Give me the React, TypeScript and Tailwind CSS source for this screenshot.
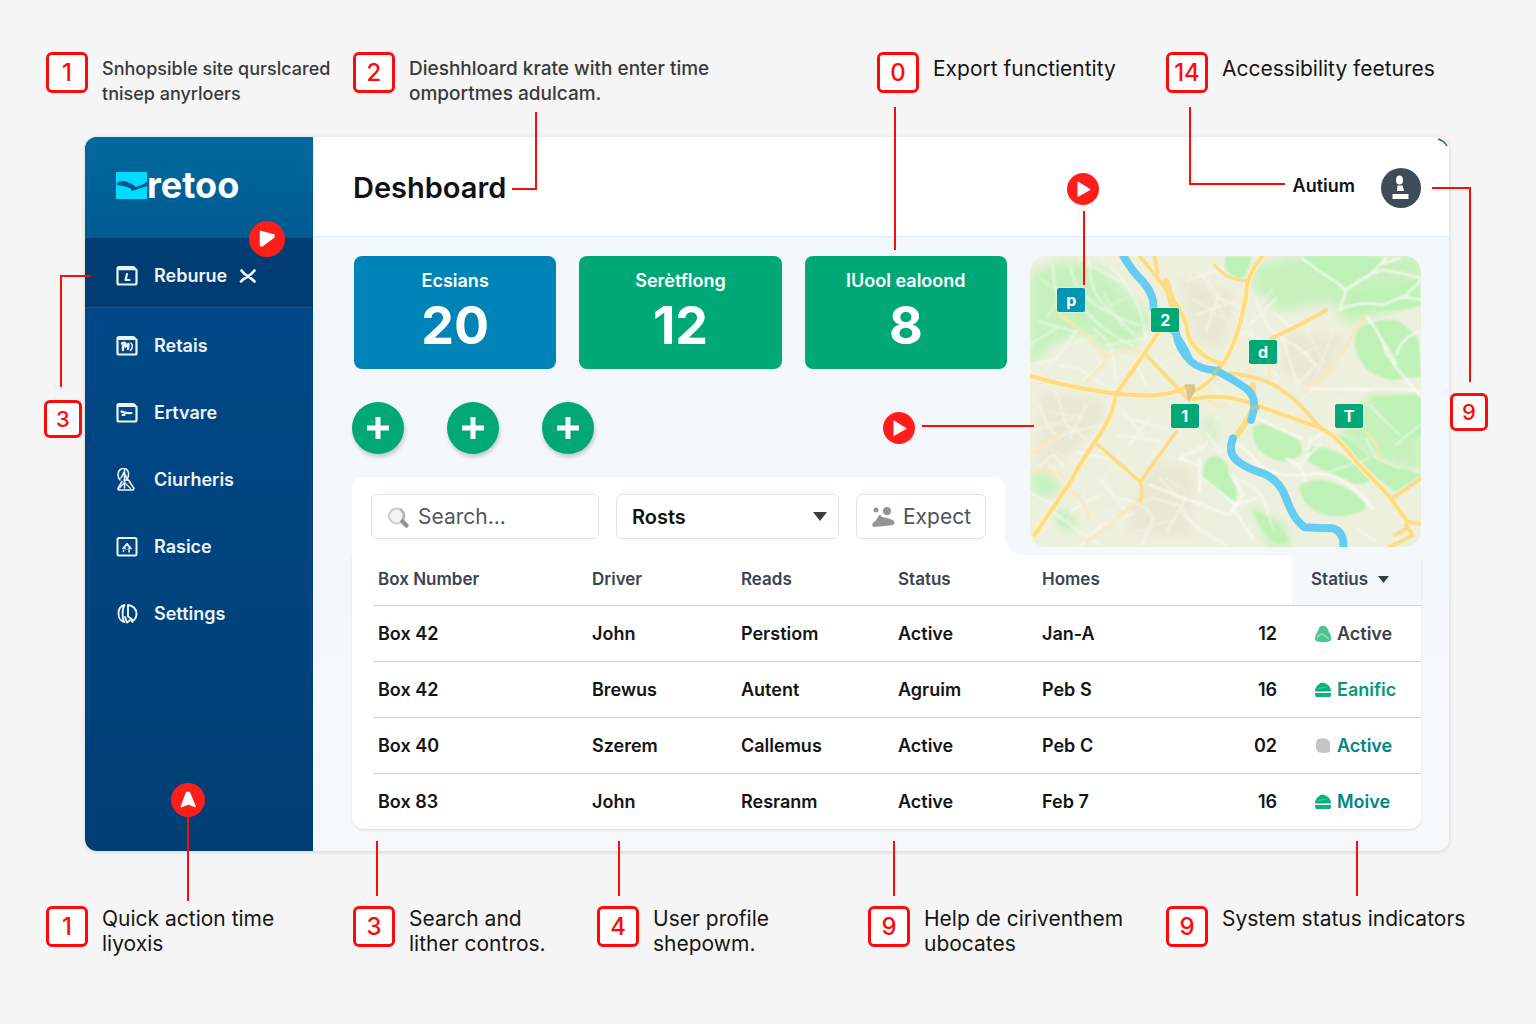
import React from "react";

type IconName = "ledger" | "photo" | "inbox" | "people" | "alert" | "globe";

const NAV: { label: string; icon: IconName }[] = [
  { label: "Retais", icon: "photo" },
  { label: "Ertvare", icon: "inbox" },
  { label: "Ciurheris", icon: "people" },
  { label: "Rasice", icon: "alert" },
  { label: "Settings", icon: "globe" },
];

const STATS = [
  { label: "Ecsians", value: "20", tone: "bg-[#0084b8]" },
  { label: "Serètflong", value: "12", tone: "bg-[#00a878]" },
  { label: "IUool ealoond", value: "8", tone: "bg-[#00a878]" },
];

const ROWS = [
  { box: "Box 42", driver: "John", reads: "Perstiom", status: "Active", home: "Jan-A", count: "12", state: "Active", tone: "text-[#3c4148]", mark: "bell" },
  { box: "Box 42", driver: "Brewus", reads: "Autent", status: "Agruim", home: "Peb S", count: "16", state: "Eanific", tone: "text-[#009b74]", mark: "dome" },
  { box: "Box 40", driver: "Szerem", reads: "Callemus", status: "Active", home: "Peb C", count: "02", state: "Active", tone: "text-[#008583]", mark: "block" },
  { box: "Box 83", driver: "John", reads: "Resranm", status: "Active", home: "Feb 7", count: "16", state: "Moive", tone: "text-[#008583]", mark: "dome" },
];

const PINS = [
  { label: "p", pos: "left-[7%] top-[11%]", tone: "bg-[#0097b2]" },
  { label: "2", pos: "left-[31%] top-[18%]", tone: "bg-[#00a878]" },
  { label: "d", pos: "left-[56%] top-[29%]", tone: "bg-[#00a878]" },
  { label: "1", pos: "left-[36%] top-[51%]", tone: "bg-[#00a878]" },
  { label: "T", pos: "left-[78%] top-[51%]", tone: "bg-[#00a878]" },
];

function NavIcon({ name }: { name: IconName }) {
  const frame = "M3.5 3h14.5l3 3V19a1.500 1.500 0 0 1-1.500 1.500H3.500A1.500 1.500 0 0 1 2 19V4.500A1.500 1.500 0 0 1 3.500 3z";
  return (
    <svg viewBox="0 0 23 24" className="h-6 w-6 shrink-0" fill="none" stroke="#eef3f8" strokeWidth="2.2" strokeLinejoin="round" strokeLinecap="round" aria-hidden="true">
      {name === "ledger" && (
        <>
          <path d={frame} />
          <path d="M3 5h16" strokeWidth="2.500" />
          <path d="M11.500 10l-1.500 6h4" />
        </>
      )}
      {name === "photo" && (
        <>
          <path d={frame} />
          <path d="M3 5h16" strokeWidth="2" />
          <path d="M6.500 9.500q2-1.500 3.500 0l-2.500 2.500v4M10 12.500l3-2.500-.5 5" strokeWidth="2.400" />
          <path d="M15.500 9q3 3-.5 7.500" strokeWidth="1.500" />
        </>
      )}
      {name === "inbox" && (
        <>
          <path d={frame} />
          <path d="M3 5h16" strokeWidth="2" />
          <path d="M6 10.500q3 2 10 1.500M7 14h2" strokeWidth="2.200" />
        </>
      )}
      {name === "people" && (
        <g strokeWidth="1.600">
          <path d="M4.500 12C1.500 9 2 3 5.500 1c3-2 7 0 7.500 4 .3 3-.5 5-1.500 7" />
          <path d="M9 1.500V20M5.500 10l3-6 3.500 8" />
          <path d="M8.500 12h4.500l5.500 8.500-1 1.500H3l-.5-1.500 4-7" />
          <path d="M4 20l5-5.500 6 6" strokeWidth="1.200" />
        </g>
      )}
      {name === "alert" && (
        <>
          <rect x="2" y="3" width="19" height="17.500" rx="1.500" strokeWidth="2" />
          <path d="M7 13.500l4.500-5.500 4.500 5.500z" fill="#eef3f8" strokeWidth="1" />
          <circle cx="11.500" cy="12.500" r="1.500" fill="#00498a" stroke="none" />
          <path d="M8 16.500v-1M13.500 17v-2" strokeWidth="1.500" />
        </>
      )}
      {name === "globe" && (
        <g strokeWidth="1.900">
          <path d="M9 3C5 4 3 7 3 11.500S5.500 19.500 9 20c-2.500-3.500-2.500-13 0-17z" />
          <path d="M12.500 3c5 .5 8.500 4 8.500 8.500 0 3-1 5.500-3 7l-5.500-4z" />
          <path d="M9.500 15l2 5.500 4-3 1.500 2.500" />
        </g>
      )}
    </svg>
  );
}

function NumberBox({ children, small = false }: { children: React.ReactNode; small?: boolean }) {
  return (
    <span
      className={
        small
          ? "flex h-[38px] w-[38px] items-center justify-center rounded-md border-3 border-[#ff0a0a] bg-white text-[22px] font-medium leading-none text-[#ff0a0a]"
          : "flex h-[41px] w-[42px] shrink-0 items-center justify-center rounded-md border-3 border-[#ff0a0a] bg-white text-2xl font-medium leading-none text-[#ff0a0a]"
      }
    >
      {children}
    </span>
  );
}

const NOTE_TEXT = {
  compact: "pt-1 text-lg font-medium leading-[25px] text-[#3a3a3a]",
  strong: "pt-1 text-[19px] font-medium leading-[25px] text-[#3a3a3a]",
  plain: "pt-1 text-[21px] leading-[26px] text-[#161616]",
  low: "text-[21px] leading-[25px] text-[#161616]",
};

function Note({ num, lines, kind = "plain", children }: { num: string; lines: string[]; kind?: keyof typeof NOTE_TEXT; children?: React.ReactNode }) {
  return (
    <div className="relative flex items-start gap-[14px]">
      <NumberBox>{num}</NumberBox>
      <p className={NOTE_TEXT[kind]}>
        {lines.map((l) => (
          <span key={l} className="block whitespace-nowrap">
            {l}
          </span>
        ))}
      </p>
      {children}
    </div>
  );
}

function Pointer({ kind, className }: { kind: "play" | "flag" | "up"; className: string }) {
  return (
    <svg viewBox="0 0 36 36" className={`absolute ${className}`} aria-hidden="true">
      <circle cx="18" cy="18" r="18" fill="#ff1e19" />
      <g fill="#fff" stroke="#fff" strokeWidth="1.500" strokeLinejoin="round">
        {kind === "play" && <path d="M12.500 10.500v15.500l13-7.500z" />}
        {kind === "flag" && <path d="M11.500 10.500l13.500 3.500-.5 2.500-11.500 8.500-1.500-.5z" />}
        {kind === "up" && <path d="M16.500 10h3l6 15-7-3-7.500 3z" />}
      </g>
    </svg>
  );
}

function StatusMark({ kind }: { kind: string }) {
  return (
    <svg viewBox="0 0 16 18" className="h-[18px] w-4 shrink-0" aria-hidden="true">
      {kind === "bell" && (
        <>
          <path d="M4.500 2Q8-.5 11.500 2q2 3 3 6 2 3 1.500 7-1 2-8 2-6.500 0-8-2Q-.5 10 2.500 7z" fill="#4cc68f" />
          <path d="M2 13.500q2-5 6-4l6 4.500" stroke="#8fe0b9" strokeWidth="1.500" fill="none" />
        </>
      )}
      {kind === "dome" && (
        <>
          <path d="M0 10.500Q0 6 3 4q4-5 10 0 3 2 3 6.500z" fill="#0bb37c" />
          <path d="M0 12h16q.5 2-1 4H1Q-.5 14 0 12z" fill="#0bb37c" />
          <path d="M3 7.500l9-1.500" stroke="#47cfa0" strokeWidth="1" />
        </>
      )}
      {kind === "block" && <path d="M3 2q5-1.500 9 0l3 3v10q-6 2-12 0l-2-3V5z" fill="#c3c5c7" />}
    </svg>
  );
}

function CityMap() {
  return (
    <svg viewBox="30 33 1176 873" preserveAspectRatio="xMidYMid slice" className="absolute inset-0 h-full w-full" fill="none" strokeLinecap="round" strokeLinejoin="round" role="img" aria-label="Map">
      <defs>
        <filter id="soft" x="-10%" y="-10%" width="120%" height="120%">
          <feGaussianBlur stdDeviation="14" />
        </filter>
        <filter id="fine" x="-10%" y="-10%" width="120%" height="120%">
          <feGaussianBlur stdDeviation="3" />
        </filter>
      </defs>
      <rect x="30" y="33" width="1176" height="873" fill="#eef0de" />
      <g fill="#c6f1bd" filter="url(#soft)">
        <path d="M30 90L130 45 240 60 330 150 400 220 340 310 260 310 190 260 100 300 30 360z" />
        <path d="M700 60L850 33H1206V170L980 240 940 170 780 200 700 130z" />
        <path d="M1050 450H1206V680L1050 640 960 560z" />
        <path d="M30 680l70 10 30 50-80 20zM100 790l60 10 10 60-50-10zM690 780l110 60 10 66h-60z" />
        <path d="M560 510l30 20v60l-30-10z" />
      </g>
      <g fill="#eae8d4" filter="url(#soft)">
        <path d="M60 440l180 20 20 60-120 120-90 30zM400 640l130 40-20 200-200-20zM800 260l180 10-80 160-120-50z" />
        <path d="M470 90l180 50-40 180-80-30z" />
      </g>
      <g fill="#bdf1b6" filter="url(#fine)">
        <path d="M850 33H1060Q1110 60 1080 85 1020 90 980 135 930 120 900 90 860 70 850 33z" />
        <path d="M990 150q60-25 120-20t80-40l16 90q-60 20-110 15t-110 10z" />
        <path d="M1015 250q60-30 120-25l60 50 11 120-90 10q-70-15-90-55-35-50-11-100z" />
        <path d="M620 33h75q-5 50-30 70-40-10-50-40z" />
        <path d="M700 550q20-25 50-10l70 30q35 20 25 60-50 30-90 10-60-30-55-90z" />
        <path d="M860 615q30-20 80 0 60 30 110 80 0 30-50 20-80-30-140-70z" />
        <path d="M840 720q50-30 120 0t80 70q-50 35-130 18-70-30-70-88z" />
        <path d="M1060 455l146-5v120l-60 20q-60-50-86-135z" />
        <path d="M940 570q50 0 100 60l166 60-80 50q-80-60-186-170z" />
        <path d="M555 655q20-35 50-15 30 20 20 45l25 40v45q-50-15-100-70z" />
        <path d="M700 795q70 20 110 95l-40 5q-50-40-70-100z" />
      </g>
      <g stroke="#fdfdf6" strokeWidth="7" opacity=".85" filter="url(#fine)">
        <path d="M848 40q50 40 100 70l30 25 70-45 40-15 60 10 56 15M1040 100l60-60M1080 60l60-20M980 135l-20 60q60-30 130-15l60-25 56 10M1150 160l50-50" />
        <path d="M1040 215q40 40 60 110 40 60 106 130M1070 255l60 100M1130 330q20-60 76-70M860 430q100 0 180 5 60-10 166 5" />
        <path d="M660 600q40 30 60 60 60 40 130 30 90-20 150 40 30 20 60 60M715 520l60 30 70 30M860 640l10-50 60-40M800 640q50 20 60 70M900 600l-60 60" />
        <path d="M540 640v100M550 700l100 80 60-20M640 690l30 60-40 60-80-30-160-60M640 790l60 90M540 660l-60-20 80-40" />
      </g>
      <g stroke="#fdfdf6" strokeWidth="6" opacity=".6" filter="url(#fine)">
        <path d="M30 740q40 30 80 40M40 680l60-50 30 30M30 620l120-60 100-20M90 660l40 50M100 800l80 60 60 40" />
        <path d="M100 60q0 60 20 110M150 60q20 80 80 120t130 60M210 45q0 90 40 130t100 100M60 230l110 30-60 80-80 20M180 170q60 90 160 130M270 60q60 60 90 130l20 90M300 110l-120-70" />
        <path d="M30 300l80-50M220 250q50 30 60 80l10 80M260 300l120-20M340 340l40 80M190 410l60-60M120 360l60 10 70 50" />
        <path d="M540 80l60 80 70 30M500 110l110-40M530 210l110-40M560 260l40-120M620 320q40-60 60-60l100 60M690 240l80-80M710 160q20 90 80 120l80 50M760 200l60 50M790 280l40 130M830 300l60 60-60 60M720 340l60 60" />
        <path d="M330 520l110 30M310 500l60 70M290 570l140 20M260 640l-90-20M330 600l60-80M200 480l-50 100M60 480q20 70 60 100M110 440l30 100 60 40M40 560l120-40" />
        <path d="M400 760l80 20 60 80M420 700l60 60M300 760q90 20 100 60l-30 80M240 700l80 100M150 800l90-50M180 906l60-60 100-40M440 860l60-100M480 800q60 60 140 100" />
        <path d="M1040 580l30 60 70 30M930 680l120-40M1130 600l70-60M1050 480l90 90M860 870l-20-60M1010 850l60 40M650 700q70 30 80 60l30 90M560 560l40 60 60-20" />
      </g>
      <g stroke="#fbfaee" strokeWidth="4" opacity=".6" filter="url(#fine)">
        <path d="M60 100l90 60M140 130l-60 90M200 90l-40 120M250 140l60 110M320 160l-90 40M150 300l90-30M60 400l50-60M400 340l60 60M480 330l-60 30" />
        <path d="M560 120l70 120M520 160l90 60M640 200l60 60M760 130l-60 80M860 260l60 100M900 300l-110 60M940 260l-60 160M580 420l60 60M600 500l-40 100" />
        <path d="M80 500l130 20M70 600l110 60M300 620l-50 90M420 600l-40 60M440 700l60 40M260 800l140-40M200 740l-60 90M470 820l-120 40M700 720l60 90M830 480l60-60M950 450l60 60M960 470l-60 60" />
      </g>
      <g stroke="#fbe6b4" strokeWidth="8" opacity=".9" filter="url(#fine)">
        <path d="M110 200l90 70 60 70q40-30 60-25t50 5M200 410l60-60M855 438q90-70 135-150t45-75M30 680q60-20 100 20M160 740q40 30 50 80M200 890q90-60 160-130M690 370l-10 30M750 400v-60M560 455q30 40 60 25M1040 560q40 40 40 90M40 620l80-50" />
      </g>
      <g stroke="#fff0c2" strokeWidth="19">
        <path d="M30 393Q180 435 310 448T500 425M45 870L150 715Q190 640 240 570 285 500 288 450L375 325 415 265M520 462Q600 445 680 470L900 548Q950 570 1010 650L1110 755 1165 830" />
        <path d="M360 33Q410 90 450 150 505 220 505 270 530 330 600 355M730 33Q680 90 680 150 655 300 600 370 570 420 520 440" />
      </g>
      <g stroke="#fddc85" strokeWidth="12">
        <path d="M30 393Q180 435 310 448T500 425" />
        <path d="M45 870L150 715Q190 640 240 570 285 500 288 450L375 325 415 265" />
        <path d="M375 325L470 425 510 465" />
        <path d="M520 462Q600 445 680 470L900 548Q950 570 1010 650L1110 755 1165 830 1206 838" />
        <path d="M360 33Q410 90 450 150 505 220 505 270 530 330 600 355M405 33l10 50" />
        <path d="M730 33Q680 90 680 150 655 300 600 370 570 420 520 440" />
        <path d="M585 60q20 25 50 38t50 7" strokeWidth="9" />
        <path d="M630 385q100 10 150 45t75 65l50 55" />
        <path d="M755 280q100-45 165-85" />
        <path d="M230 595l132 115 108-150M362 710q10 30 0 60" strokeWidth="10" />
        <path d="M700 420v70q-20 50-60 95" strokeWidth="18" />
        <path d="M1206 700l-85 58M1110 906l70-35-20-30M1125 870l40-20" />
      </g>
      <path d="M440 110l20 70" stroke="#fddc85" strokeWidth="22" />
      <path d="M498 420h26v20l-16 25z" fill="#d9c48c" stroke="#d9c48c" strokeWidth="5" />
      <path d="M312 33Q335 75 370 110 405 150 402 190M640 580Q625 620 650 645 680 670 730 685 780 705 800 760 820 820 855 847 900 850 940 850 975 860 972 910" stroke="#65cdf1" strokeWidth="24" />
      <path d="M402 190Q420 240 470 262" stroke="#65cdf1" strokeWidth="22" />
      <path d="M470 265Q475 310 515 350 540 372 590 377 620 390 680 430 710 455 703 495L695 525" stroke="#65cdf1" strokeWidth="23" />
      <path d="M470 262q0 50 30 80l25 15q-10-40-45-90z" fill="#65cdf1" />
      <path d="M580 390l20-25M692 486l28 2" stroke="#a6c9b0" strokeWidth="12" strokeLinecap="butt" />
    </svg>
  );
}

function Sidebar() {
  return (
    <aside className="relative flex w-[228px] shrink-0 flex-col rounded-l-xl bg-linear-to-b from-[#004b8e] to-[#003f74]">
      <div className="flex h-[100px] items-center rounded-tl-xl bg-linear-to-b from-[#006a9c] to-[#005a92] pb-1 pl-[31px]">
        <svg viewBox="0 0 31 27" className="h-[27px] w-[31px]" aria-hidden="true">
          <rect width="31" height="27" fill="#00dcff" />
          <path d="M1 11Q5 8 10 9.500t10 5.500q5-1 11-5v4l-9 3-6 2-2-3Q8 14 1 13z" fill="#00558c" />
        </svg>
        <span className="text-4xl font-bold leading-none text-white">retoo</span>
      </div>
      <nav aria-label="Main">
        <a href="#reburrue" aria-current="page" className="flex h-[71px] items-center border-t border-b border-[#00599a] bg-[#003d73] pb-1 pl-[30px] pt-[10px] text-lg font-semibold text-[#eef3f8]">
          <NavIcon name="ledger" />
          <span className="ml-[15px]">Reburue</span>
          <svg viewBox="0 0 18 16" className="ml-3 h-4 w-[18px]" fill="none" stroke="#eef3f8" strokeWidth="2.800" strokeLinecap="round" aria-hidden="true">
            <path d="M2.500 2.500q3 4 6 5.500t7 5.500M15.500 2.500Q12 7 8 9t-6 4.500" />
          </svg>
        </a>
        <div className="pt-1">
          {NAV.map((n) => (
            <a key={n.label} href={`#${n.label.toLowerCase()}`} className="flex h-[67px] items-center gap-[15px] pl-[30px] text-lg font-semibold text-[#eef3f8]">
              <NavIcon name={n.icon} />
              {n.label}
            </a>
          ))}
        </div>
      </nav>
      <Pointer kind="flag" className="left-[164px] top-[84px] h-9 w-9" />
    </aside>
  );
}

function Toolbar() {
  return (
    <form className="relative mr-[2px] mt-[23px] grid h-[78px] grid-cols-[228fr_223fr_130fr] items-start gap-[17px] rounded-t-xl bg-white px-[19px] pt-[17px]" onSubmit={(e) => e.preventDefault()}>
      <div className="flex h-[45px] min-w-0 items-center gap-2 rounded-md border border-[#dde5ee] bg-white pl-[14px]">
        <svg viewBox="0 0 24 24" className="h-6 w-6 shrink-0" fill="none" aria-hidden="true">
          <circle cx="10.500" cy="11" r="7.500" fill="#f3f5f5" stroke="#c9cdce" strokeWidth="2" />
          <path d="M14 4q6 4.500 3 10.500" stroke="#b0b4b4" strokeWidth="2.500" />
          <path d="M16.500 16.500l4 4" stroke="#929292" strokeWidth="4.500" strokeLinecap="round" />
        </svg>
        <input type="text" aria-label="Search" placeholder="Search..." className="min-w-0 flex-1 bg-transparent text-[21px] text-[#4a4a4a] outline-none placeholder:text-[#55585b]" />
      </div>
      <div className="relative h-[45px] min-w-0">
        <select aria-label="Filter" className="h-full w-full appearance-none rounded-md border border-[#dde5ee] bg-white pl-[15px] text-xl font-semibold text-[#111]">
          <option>Rosts</option>
        </select>
        <svg viewBox="0 0 14 9" className="pointer-events-none absolute right-3 top-[18px] h-[9px] w-[14px]" aria-hidden="true">
          <path d="M0 0h14L7 9z" fill="#3b4046" />
        </svg>
      </div>
      <button type="submit" className="flex h-[45px] min-w-0 items-center justify-center gap-2 rounded-md border border-[#dde5ee] bg-white text-[21px] text-[#505356]">
        <svg viewBox="0 0 24 22" className="h-[22px] w-6 shrink-0" fill="#949494" aria-hidden="true">
          <circle cx="5" cy="4" r="2.500" />
          <circle cx="16" cy="5" r="4" />
          <path d="M8 9q2 0 3 2 6 1 11 3 3 3 0 5-8 1-19 2-3-1-1-4 4-3 6-8z" />
        </svg>
        Expect
      </button>
      <svg viewBox="0 0 14 18" className="absolute bottom-0 left-full h-[18px] w-[14px]" aria-hidden="true">
        <path d="M0 0q2 14 14 18H0z" fill="#fff" />
      </svg>
    </form>
  );
}

function BoxTable() {
  const th = "pl-[5px] text-left text-[17px] font-semibold text-[#3a4452]";
  const td = "pl-[5px] pt-[2px] text-left";
  return (
    <div className="overflow-hidden rounded-b-xl bg-white pl-[21px] shadow-[0_1px_2px_rgba(180,200,225,0.5)]">
      <table className="w-full table-fixed border-collapse">
        <colgroup>
          <col className="w-[214px]" />
          <col className="w-[149px]" />
          <col className="w-[157px]" />
          <col className="w-[144px]" />
          <col className="w-[141px]" />
          <col className="w-[114px]" />
          <col className="w-[129px]" />
        </colgroup>
        <thead>
          <tr className="h-[50px] border-b border-[#c3d7e8]">
            <th className={th}>Box Number</th>
            <th className={th}>Driver</th>
            <th className={th}>Reads</th>
            <th className={th}>Status</th>
            <th className={th}>Homes</th>
            <th aria-label="Count" />
            <th aria-sort="descending" className="bg-[#f5f7fb] pl-[19px] text-left text-[17px] font-semibold text-[#3a4452]">
              <button type="button" className="flex items-center gap-[10px]">
                Statius
                <svg viewBox="0 0 11 7" className="h-[7px] w-[11px]" aria-hidden="true">
                  <path d="M0 0h11L5.500 7z" fill="#333d4b" />
                </svg>
              </button>
            </th>
          </tr>
        </thead>
        <tbody className="text-lg font-semibold text-[#141414]">
          {ROWS.map((r, i) => (
            <tr key={i} className="h-14 border-b border-[#c3d7e8] last:border-b-0">
              <td className={td}>{r.box}</td>
              <td className={td}>{r.driver}</td>
              <td className={td}>{r.reads}</td>
              <td className={td}>{r.status}</td>
              <td className={td}>{r.home}</td>
              <td className="pr-[15px] pt-[2px] text-right">{r.count}</td>
              <td className={`pl-[23px] pt-[2px] ${r.tone}`}>
                <span className="flex items-center gap-[6px]">
                  <StatusMark kind={r.mark} />
                  {r.state}
                </span>
              </td>
            </tr>
          ))}
        </tbody>
      </table>
    </div>
  );
}

export default function App() {
  return (
    <div className="min-h-screen overflow-x-hidden bg-[#f5f5f5] pb-16 font-[Inter,sans-serif]">
      <header className="relative z-10 grid h-[137px] grid-cols-[307fr_524fr_289fr_324fr] px-[46px] pt-[52px]">
        <Note num="1" kind="compact" lines={["Snhopsible site qurslcared", "tnisep anyrloers"]} />
        <Note num="2" kind="strong" lines={["Dieshhloard krate with enter time", "omportmes adulcam."]}>
          <span className="absolute left-[159px] top-[60px] h-[78px] w-[25px] border-b-2 border-r-2 border-[#ff0a0a]" />
        </Note>
        <Note num="0" lines={["Export functientity"]}>
          <span className="absolute left-[17px] top-[55px] h-[143px] w-[2px] bg-[#ff0a0a]" />
        </Note>
        <Note num="14" lines={["Accessibility feetures"]}>
          <span className="absolute left-[23px] top-[55px] h-[78px] w-24 border-b-2 border-l-2 border-[#ff0a0a]" />
        </Note>
      </header>

      <main className="relative ml-[85px] mr-[87px] flex rounded-xl bg-linear-to-b from-[#f1f7fc] to-[#f7f8fa] shadow-[0_1px_4px_rgba(0,0,0,0.14)]">
        <Sidebar />
        <div className="min-w-0 flex-1">
          <div className="flex h-[100px] items-center justify-between rounded-tr-xl border-b border-[#dcebf5] bg-white pl-10 pr-7 pt-[2px]">
            <h1 className="text-[29px] font-semibold text-[#111]">Deshboard</h1>
            <div className="flex items-center gap-[26px]">
              <span className="pb-1 text-lg font-semibold text-[#111]">Autium</span>
              <button type="button" aria-label="Account">
                <svg viewBox="0 0 40 40" className="h-10 w-10" aria-hidden="true">
                  <circle cx="20" cy="20" r="20" fill="#3e4c5a" />
                  <ellipse cx="18.500" cy="12" rx="3.500" ry="4.500" fill="#fff" />
                  <path d="M16.500 17.500h5l1.500 5.500h-7zM11.500 26h16v5h-16z" fill="#fff" />
                </svg>
              </button>
            </div>
          </div>

          <div className="pb-[22px] pl-[39px] pr-7 pt-[19px]">
            <div className="grid grid-cols-[655fr_391fr] gap-x-[23px]">
              <div>
                <div className="ml-[2px] grid grid-cols-3 gap-[23px]">
                  {STATS.map((s) => (
                    <div key={s.label} className={`flex h-[113px] flex-col items-center rounded-lg pt-3 text-white ${s.tone}`}>
                      <span className="text-lg font-semibold leading-[26px]">{s.label}</span>
                      <span className="text-[52px] font-bold leading-[64px]">{s.value}</span>
                    </div>
                  ))}
                </div>
                <div className="mt-[33px] flex gap-[43px]">
                  {["Add first", "Add second", "Add third"].map((l) => (
                    <button key={l} type="button" aria-label={l} className="flex h-[52px] w-[52px] items-center justify-center rounded-full bg-[#00a878] shadow-[1px_3px_4px_rgba(0,0,0,0.2)]">
                      <svg viewBox="0 0 22 22" className="h-[22px] w-[22px]" aria-hidden="true">
                        <path d="M11 0v22M0 11h22" stroke="#fff" strokeWidth="5" />
                      </svg>
                    </button>
                  ))}
                </div>
                <Toolbar />
              </div>

              <div className="relative h-[291px]">
                <div className="absolute inset-0 overflow-hidden rounded-2xl">
                  <CityMap />
                </div>
                {PINS.map((p) => (
                  <span key={p.label} className={`absolute flex h-6 w-7 items-center justify-center rounded-[2px] text-base font-bold leading-none text-white shadow-[0_0_2px_#fff] ${p.pos} ${p.tone}`}>
                    {p.label}
                  </span>
                ))}
                <Pointer kind="play" className="-top-[83px] left-[37px] h-8 w-8" />
                <span className="absolute -top-[45px] left-[53px] h-[74px] w-[2px] bg-[#ff0a0a]" />
                <Pointer kind="play" className="-left-[147px] top-[156px] h-8 w-8" />
                <span className="absolute -left-[108px] top-[169px] h-[2px] w-28 bg-[#ff0a0a]" />
              </div>
            </div>
            <BoxTable />
          </div>
        </div>

        <svg viewBox="0 0 12 10" className="absolute right-0 top-px h-[10px] w-3" fill="none" aria-hidden="true">
          <path d="M1 1q6 1.500 9 7" stroke="#1c5f8f" strokeWidth="1.500" />
        </svg>
        <div className="absolute -left-[41px] top-[263px]">
          <NumberBox small>3</NumberBox>
          <span className="absolute -top-[125px] left-4 h-28 w-[31px] border-l-2 border-t-2 border-[#ff0a0a]" />
        </div>
        <div className="absolute -right-[39px] top-[256px]">
          <NumberBox small>9</NumberBox>
          <span className="absolute -top-[206px] right-[17px] h-[195px] w-[39px] border-r-2 border-t-2 border-[#ff0a0a]" />
        </div>
      </main>

      <footer className="relative z-10 mt-[55px] grid grid-cols-[307fr_244fr_271fr_298fr_324fr] px-[46px]">
        <Note num="1" kind="low" lines={["Quick action time", "liyoxis"]}>
          <span className="absolute -top-[92px] left-[141px] h-[87px] w-[2px] bg-[#ff0a0a]" />
          <Pointer kind="up" className="-top-[123px] left-[125px] h-[34px] w-[34px]" />
        </Note>
        <Note num="3" kind="low" lines={["Search and", "lither contros."]}>
          <span className="absolute -top-[65px] left-[23px] h-[55px] w-[2px] bg-[#ff0a0a]" />
        </Note>
        <Note num="4" kind="low" lines={["User profile", "shepowm."]}>
          <span className="absolute -top-[65px] left-[21px] h-[55px] w-[2px] bg-[#ff0a0a]" />
        </Note>
        <Note num="9" kind="low" lines={["Help de ciriventhem", "ubocates"]}>
          <span className="absolute -top-[65px] left-[25px] h-[55px] w-[2px] bg-[#ff0a0a]" />
        </Note>
        <Note num="9" kind="low" lines={["System status indicators"]}>
          <span className="absolute -top-[65px] left-[190px] h-[55px] w-[2px] bg-[#ff0a0a]" />
        </Note>
      </footer>
    </div>
  );
}
